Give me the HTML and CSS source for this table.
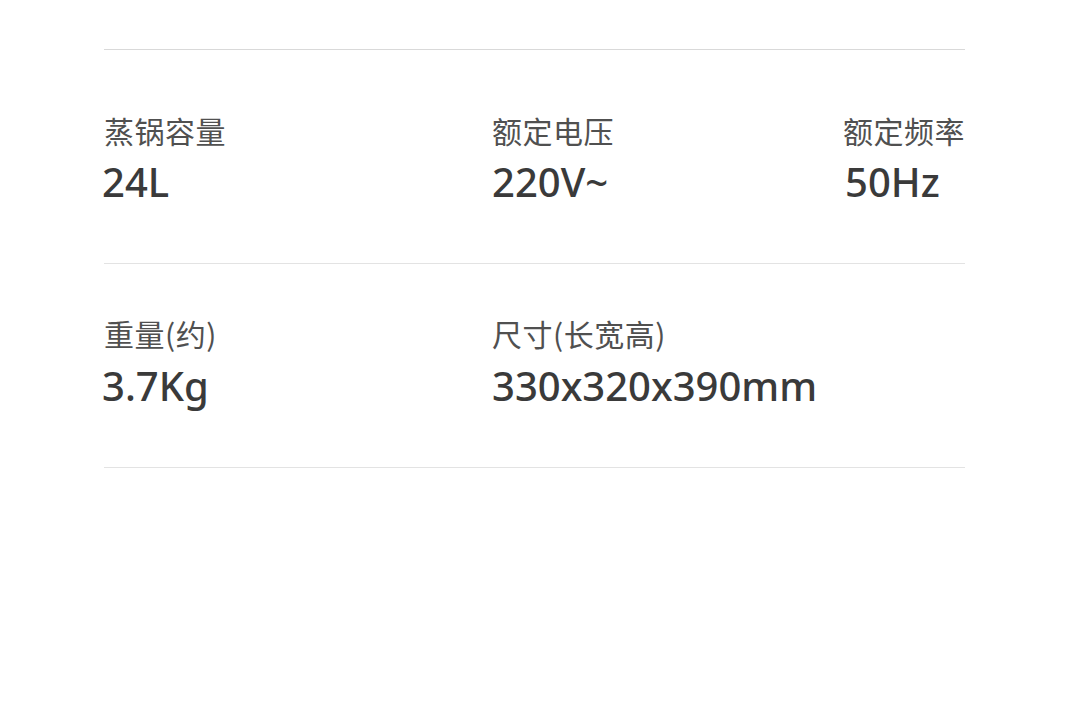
FILE: index.html
```html
<!DOCTYPE html>
<html lang="zh-CN">
<head>
<meta charset="utf-8">
<link rel="stylesheet" href="styles.css">
</head>
<body>
<div class="page">
  <div class="specs">
    <div class="row row-first">
      <div class="item">
        <div class="label">蒸锅容量</div>
        <div class="value">24L</div>
      </div>
      <div class="item">
        <div class="label">额定电压</div>
        <div class="value">220V~</div>
      </div>
      <div class="item">
        <div class="label">额定频率</div>
        <div class="value">50Hz</div>
      </div>
    </div>
    <div class="row row-second">
      <div class="item">
        <div class="label">重量(约)</div>
        <div class="value">3.7Kg</div>
      </div>
      <div class="item">
        <div class="label">尺寸(长宽高)</div>
        <div class="value">330x320x390mm</div>
      </div>
    </div>
  </div>
</div>
</body>
</html>
```

FILE: styles.css
```css
html, body {
  margin: 0;
  padding: 0;
  background: #ffffff;
}

.page {
  width: 1080px;
  height: 720px;
  padding-top: 49px;
  box-sizing: border-box;
}

.specs {
  margin-left: 104px;
  width: 861px;
  border-top: 1px solid #d9d9d9;
}

.row {
  display: grid;
  grid-template-columns: 388px 351px 1fr;
  border-bottom: 1px solid #e3e3e3;
}

.row-first {
  padding: 59px 0 57px;
}

.row-second {
  padding: 48px 0 57px;
}

.label {
  font-family: "Noto Sans CJK SC", "Noto Sans", sans-serif;
  font-size: 30px;
  line-height: 42px;
  color: #505050;
  letter-spacing: 0.5px;
}

.value {
  font-family: "Noto Sans", "Noto Sans CJK SC", sans-serif;
  font-size: 40px;
  line-height: 48px;
  font-weight: 500;
  color: #3a3a3a;
  margin-top: 7px;
}

.item:first-child .value {
  margin-left: -2px;
}

.item:nth-child(3) .value {
  margin-left: 2px;
}

.row-second .value {
  margin-top: 8px;
}
```
